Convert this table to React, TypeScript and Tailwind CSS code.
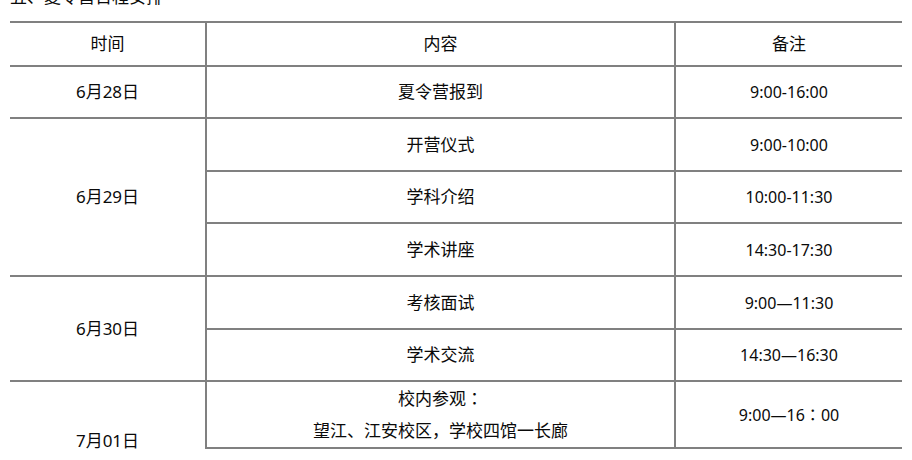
import React from "react";

const cell = "border-2 border-[#808080] p-0 text-center align-middle font-normal";
const first = `${cell} border-l-0`;
const last = `${cell} border-r-0 text-[16px]`;

// fullwidth colon drawn centred, as in the reference
const Colon = () => (
  <span style={{ fontFamily: '"Noto Sans CJK TC", sans-serif' }}>：</span>
);

const App = () => {
  return (
    <div
      className="h-[449px] w-[912px] overflow-hidden bg-white text-[17px] text-[#0a0a0a]"
      style={{ fontFamily: '"Noto Sans", "Noto Sans CJK SC", sans-serif' }}
    >
      <div className="h-[13px] overflow-hidden pl-[10px]">
        <p className="-mt-[15px] leading-[24px]">五、夏令营日程安排</p>
      </div>
      <table className="ml-[10px] mt-[8px] w-[892px] table-fixed border-collapse">
        <colgroup>
          <col className="w-[196px]" />
          <col className="w-[469px]" />
          <col className="w-[227px]" />
        </colgroup>
        <thead>
          <tr>
            <th className={`${first} h-[44px]`}>时间</th>
            <th className={`${cell} h-[44px]`}>内容</th>
            <th className={`${cell} border-r-0 h-[44px]`}>备注</th>
          </tr>
        </thead>
        <tbody>
          <tr>
            <td className={`${first} h-[52px]`}>6月28日</td>
            <td className={`${cell} h-[52px]`}>夏令营报到</td>
            <td className={`${last} h-[52px]`}>9:00-16:00</td>
          </tr>
          <tr>
            <td rowSpan={3} className={first}>
              6月29日
            </td>
            <td className={`${cell} h-[53px]`}>开营仪式</td>
            <td className={`${last} h-[53px]`}>9:00-10:00</td>
          </tr>
          <tr>
            <td className={`${cell} h-[52px]`}>学科介绍</td>
            <td className={`${last} h-[52px]`}>10:00-11:30</td>
          </tr>
          <tr>
            <td className={`${cell} h-[53px]`}>学术讲座</td>
            <td className={`${last} h-[53px]`}>14:30-17:30</td>
          </tr>
          <tr>
            <td rowSpan={2} className={first}>
              6月30日
            </td>
            <td className={`${cell} h-[53px]`}>考核面试</td>
            <td className={`${last} h-[53px]`}>9:00—11:30</td>
          </tr>
          <tr>
            <td className={`${cell} h-[52px]`}>学术交流</td>
            <td className={`${last} h-[52px]`}>14:30—16:30</td>
          </tr>
          <tr>
            <td rowSpan={2} className={first}>
              7月01日
            </td>
            <td className={`${cell} h-[65px] leading-[32px]`}>
              校内参观
              <Colon />
              <br />
              望江、江安校区，学校四馆一长廊
            </td>
            <td className={`${last} h-[65px]`}>
              9:00—16
              <Colon />
              00
            </td>
          </tr>
          <tr>
            <td className={`${cell} h-[53px]`}></td>
            <td className={`${last} h-[53px]`}></td>
          </tr>
        </tbody>
      </table>
    </div>
  );
};

export default App;
